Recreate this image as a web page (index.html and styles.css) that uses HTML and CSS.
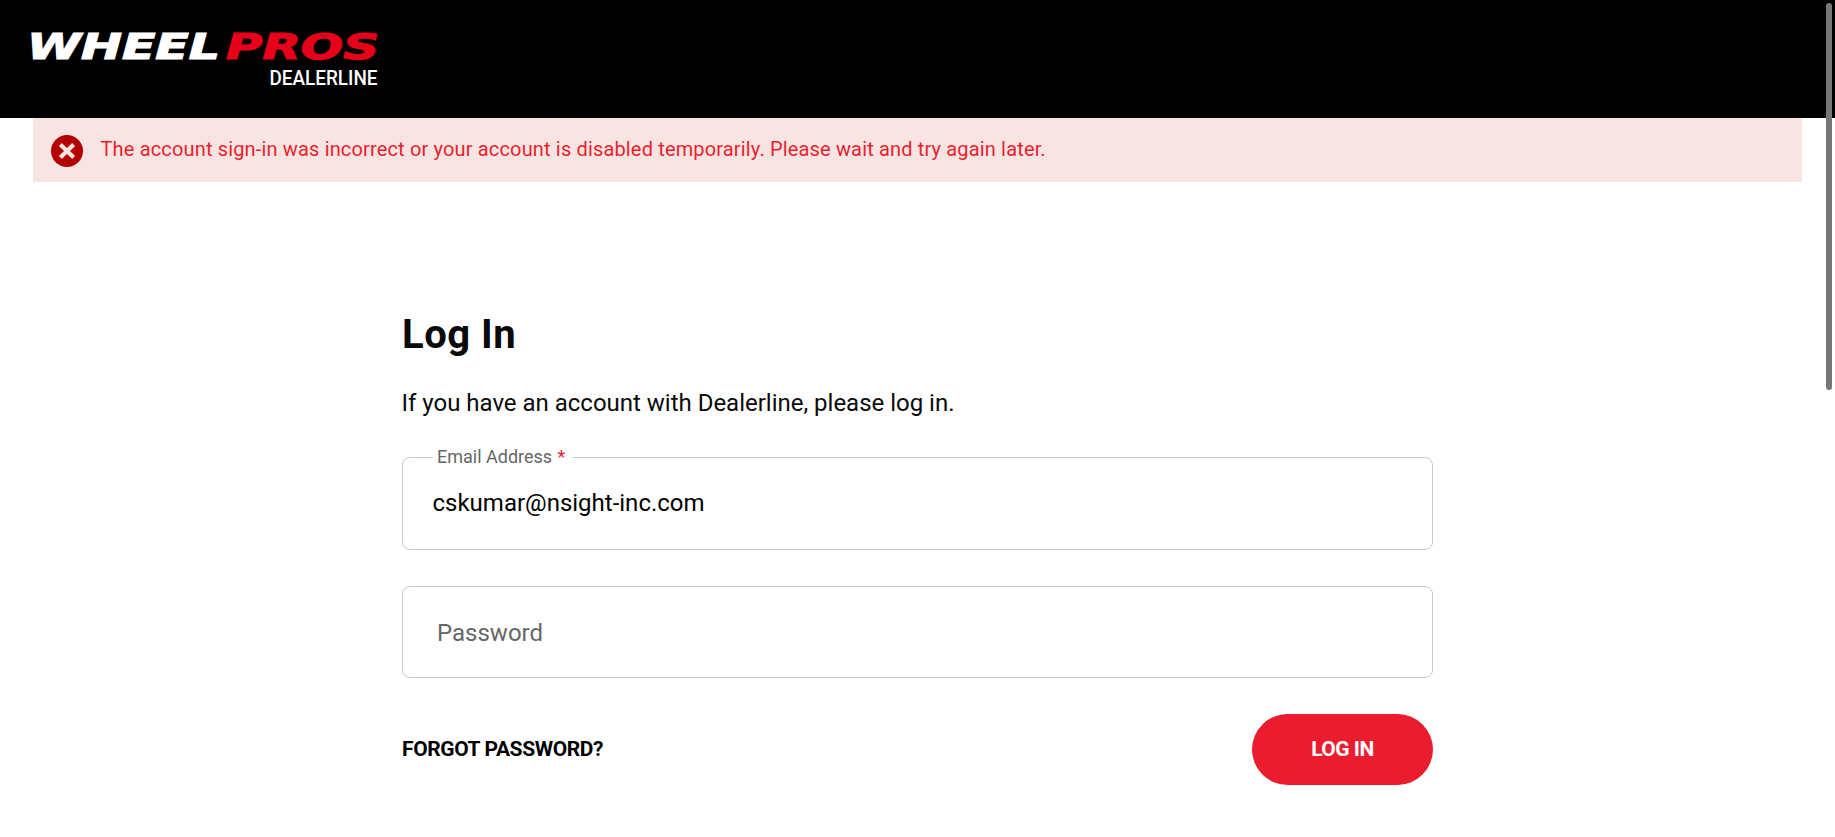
FILE: index.html
```html
<!DOCTYPE html>
<html lang="en">
<head>
<meta charset="utf-8">
<title>Log In | Wheel Pros Dealerline</title>
<link rel="stylesheet" href="styles.css">
</head>
<body>
<header class="header">
  <svg class="logo" width="354" height="64" viewBox="0 0 354 64" role="img" aria-label="Wheel Pros Dealerline">
    <text class="logo-mark" x="-1" y="35.3" textLength="193" lengthAdjust="spacingAndGlyphs">WHEEL</text>
    <text class="logo-mark logo-red" x="198" y="35.3" textLength="153" lengthAdjust="spacingAndGlyphs">PROS</text>
    <text class="logo-sub" x="241.5" y="61" textLength="108" lengthAdjust="spacingAndGlyphs">DEALERLINE</text>
  </svg>
</header>
<div class="alert" role="alert">
  <svg class="alert-icon" width="32" height="32" viewBox="0 0 32 32">
    <circle cx="16" cy="16" r="16" fill="#b30000"/>
    <path d="M9.4 9.4 22.6 22.6M22.6 9.4 9.4 22.6" stroke="#f9e4e2" stroke-width="4.2"/>
  </svg>
  <span class="alert-text">The account sign-in was incorrect or your account is disabled temporarily. Please wait and try again later.</span>
</div>
<main class="login">
  <h1 class="title">Log In</h1>
  <p class="intro">If you have an account with Dealerline, please log in.</p>
  <div class="field field-email">
    <span class="field-label">Email Address <span class="required">*</span></span>
    <span class="field-value">cskumar@nsight-inc.com</span>
  </div>
  <div class="field field-password">
    <span class="field-placeholder">Password</span>
  </div>
  <div class="actions">
    <a class="forgot">FORGOT PASSWORD?</a>
    <button class="submit" type="button"><span class="submit-text">LOG IN</span></button>
  </div>
</main>
<div class="scroll-thumb"></div>
</body>
</html>
```
FILE: styles.css
```css
* { box-sizing: border-box; }
body {
  margin: 0;
  height: 837px;
  overflow: hidden;
  background: #fff;
  color: #0a0a0a;
  font-family: Roboto, sans-serif;
}
.header { height: 118px; padding: 24px 28px; background: #000; }
.logo { display: block; overflow: visible; }
.logo-mark {
  font: italic bold 35px "DejaVu Sans", sans-serif;
  fill: #fff;
  stroke: #fff;
  stroke-width: 1.2px;
}
.logo-red { fill: #e60019; stroke: #e60019; }
.logo-sub { font: 500 20px Roboto, sans-serif; fill: #fff; }
.alert {
  display: flex;
  align-items: flex-start;
  gap: 18px;
  height: 64px;
  margin: 0 33px;
  padding: 17px 17px 0;
  background: #f8e5e3;
  color: #eb1f2d;
}
.alert-icon { margin-left: 0.5px; }
.alert-text { font-size: 20px; line-height: 28px; letter-spacing: 0.157px; }
.login { width: 1031px; margin: 132px auto 0 402px; }
.title { margin: 0; font-size: 40px; line-height: 42px; font-weight: 700; letter-spacing: 0.5px; }
.intro { margin: 33px 0 0 -0.5px; font-size: 24px; line-height: 28px; letter-spacing: -0.01px; }
.field {
  position: relative;
  display: flex;
  border: 1px solid #c8c8c8;
  border-radius: 8px;
  height: 93px;
}
.field-email { margin-top: 40px; padding: 31px 29.5px 0; }
.field-password { margin-top: 36px; padding: 32px 34px 0; height: 92px; }
.field-label {
  position: absolute;
  top: -12px;
  left: 30px;
  width: 140px;
  padding-left: 4px;
  background: #fff;
  color: #666;
  font-size: 18px;
  line-height: 22px;
  white-space: nowrap;
}
.required { margin-left: 1px; color: #eb1c2d; }
.field-value, .field-placeholder { font-size: 24px; line-height: 28px; }
.field-value { color: #000; }
.field-placeholder { color: #666; }
.actions { display: flex; align-items: center; justify-content: space-between; margin-top: 36px; }
.forgot { padding-bottom: 2px; color: #000; font-size: 21px; line-height: 26px; font-weight: 700; letter-spacing: -0.4px; }
.submit {
  width: 181px;
  height: 71px;
  padding: 0 0 2px;
  border: 0;
  border-radius: 36px;
  background: #eb1c2d;
  color: #fff;
  font: 700 21px/26px Roboto, sans-serif;
  letter-spacing: -0.5px;
}
.scroll-thumb {
  position: absolute;
  top: 3px;
  right: 3px;
  width: 6px;
  height: 387px;
  border-radius: 3px;
  background: #777;
}
```
